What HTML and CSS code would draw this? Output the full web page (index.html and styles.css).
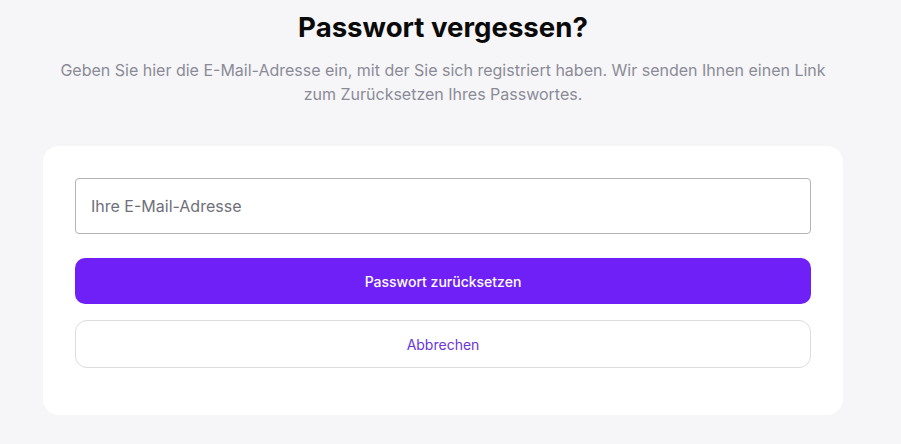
FILE: index.html
```html
<!DOCTYPE html>
<html lang="de">
<head>
<meta charset="utf-8">
<title>Passwort vergessen?</title>
<link rel="stylesheet" href="styles.css">
</head>
<body>
<main class="page">
  <header class="intro">
    <h1 class="title">Passwort vergessen?</h1>
    <p class="lead">Geben Sie hier die E-Mail-Adresse ein, mit der Sie sich registriert haben. Wir senden Ihnen einen Link zum Zurücksetzen Ihres Passwortes.</p>
  </header>
  <form class="card">
    <input class="field" type="email" placeholder="Ihre E-Mail-Adresse">
    <button class="btn btn-primary" type="button">Passwort zurücksetzen</button>
    <button class="btn btn-secondary" type="button">Abbrechen</button>
  </form>
</main>
</body>
</html>
```

FILE: styles.css
```css
* { box-sizing: border-box; }
html, body { margin: 0; padding: 0; }
body {
  background: #f6f6f8;
  font-family: Inter, "Noto Sans", sans-serif;
  color: #111;
}
.page {
  width: 800px;
  margin-left: 43px;
  display: flex;
  flex-direction: column;
}
.intro {
  text-align: center;
  padding-top: 8px;
}
.title {
  margin: 0;
  font-size: 27.6px;
  line-height: 38px;
  font-weight: 700;
  color: #0a0a0a;
}
.lead {
  margin: 12px 0 0;
  padding: 0 8px;
  font-size: 16px;
  line-height: 24px;
  color: #8b8b97;
}
.card {
  margin-top: 40px;
  background: #fff;
  border-radius: 16px;
  padding: 32px 32px 47px;
  display: flex;
  flex-direction: column;
}
.field {
  height: 56px;
  border: 1px solid #b4b4b8;
  border-radius: 4px;
  padding: 0 15px;
  font-family: inherit;
  font-size: 16px;
  color: #222;
  outline: none;
}
.field::placeholder { color: #6f6f7a; }
.btn {
  font-family: inherit;
  font-size: 14px;
  cursor: pointer;
}
.btn-primary {
  margin-top: 24px;
  height: 46px;
  border: none;
  border-radius: 10px;
  background: #6e20f6;
  color: #fff;
  font-weight: 500;
}
.btn-secondary {
  margin-top: 16px;
  height: 48px;
  border: 1px solid #dcdce0;
  border-radius: 12px;
  background: #fff;
  color: #6a35d6;
  font-weight: 400;
}
```
